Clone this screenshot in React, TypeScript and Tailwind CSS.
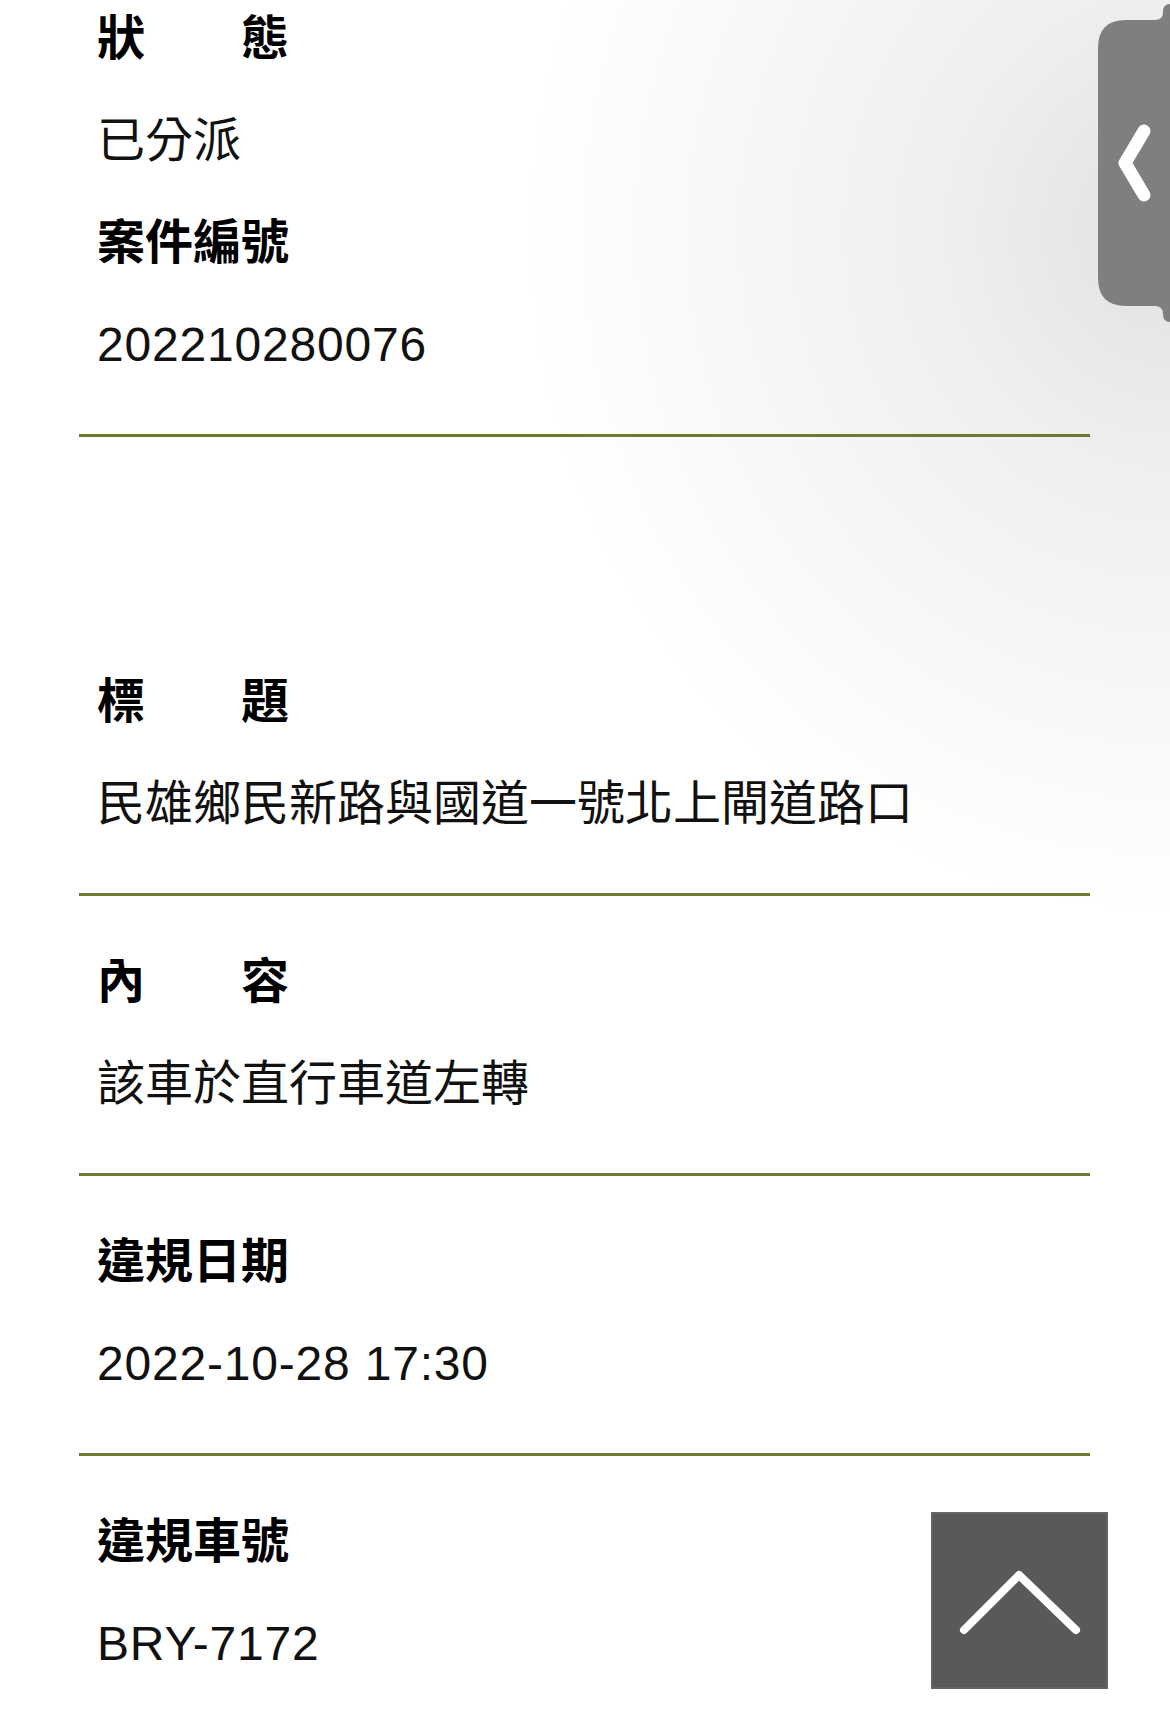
import React from 'react'

type Field = { label: string, value: string, latin?: boolean }

const font = "font-['Liberation_Sans','Noto_Sans_CJK_TC',sans-serif]"

const FieldBlock = ({ label, value, latin }: Field) => (
  <div className="flex flex-col gap-[30px]">
    <div className="font-bold text-black text-[48px] leading-[72px]">{label}</div>
    <div className={`text-[#111] text-[48px] leading-[72px] ${latin ? 'tracking-[0.8px]' : ''}`}>{value}</div>
  </div>
)

const Section = ({ fields, className = '' }: { fields: Field[], className?: string }) => (
  <div className={`border-b-[3px] border-[#6c7b30] pl-[18px] pb-[53px] flex flex-col gap-[30px] ${className}`}>
    {fields.map(f => <FieldBlock key={f.label} {...f} />)}
  </div>
)

const SideTab = () => (
  <svg className="absolute top-0 right-0" width="80" height="330" viewBox="0 0 80 330">
    <path
      d="M80 4 Q73 4 73 12 Q73 20 65 20 L36 20 Q8 20 8 48 L8 278 Q8 306 36 306 L65 306 Q73 306 73 314 Q73 322 80 322 Z"
      fill="#7f7f7f"
    />
    <path d="M54 131 L35 163 L54 195" fill="none" stroke="#fff" strokeWidth="13" strokeLinecap="round" strokeLinejoin="round" />
  </svg>
)

const BackToTop = () => (
  <button className="absolute left-[931px] top-[1512px] w-[177px] h-[177px] bg-[#595959] border-2 border-[#656565] cursor-pointer">
    <svg width="173" height="173" viewBox="0 0 173 173" className="block">
      <path d="M31 116 L86 61 L143 116" fill="none" stroke="#fff" strokeWidth="8" strokeLinecap="round" strokeLinejoin="round" />
    </svg>
  </button>
)

export default function App() {
  return (
    <div className={`relative w-full h-[1728px] overflow-hidden bg-white bg-[radial-gradient(ellipse_640px_680px_at_1170px_230px,#e1e1e1_0%,#efefef_35%,#ffffff_100%)] ${font}`}>
      <div className="ml-[79px] w-[1011px] flex flex-col">

        {/* 狀態 / 案件編號 */}
        <Section
          className="pt-[3px]"
          fields={[
            { label: '狀　　態', value: '已分派' },
            { label: '案件編號', value: '202210280076', latin: true },
          ]}
        />

        <Section className="pt-[229px]" fields={[{ label: '標　　題', value: '民雄鄉民新路與國道一號北上閘道路口' }]} />
        <Section className="pt-[50px]" fields={[{ label: '內　　容', value: '該車於直行車道左轉' }]} />
        <Section className="pt-[50px]" fields={[{ label: '違規日期', value: '2022-10-28 17:30', latin: true }]} />
        <Section className="pt-[50px]" fields={[{ label: '違規車號', value: 'BRY-7172', latin: true }]} />

      </div>

      <SideTab />
      <BackToTop />
    </div>
  )
}
